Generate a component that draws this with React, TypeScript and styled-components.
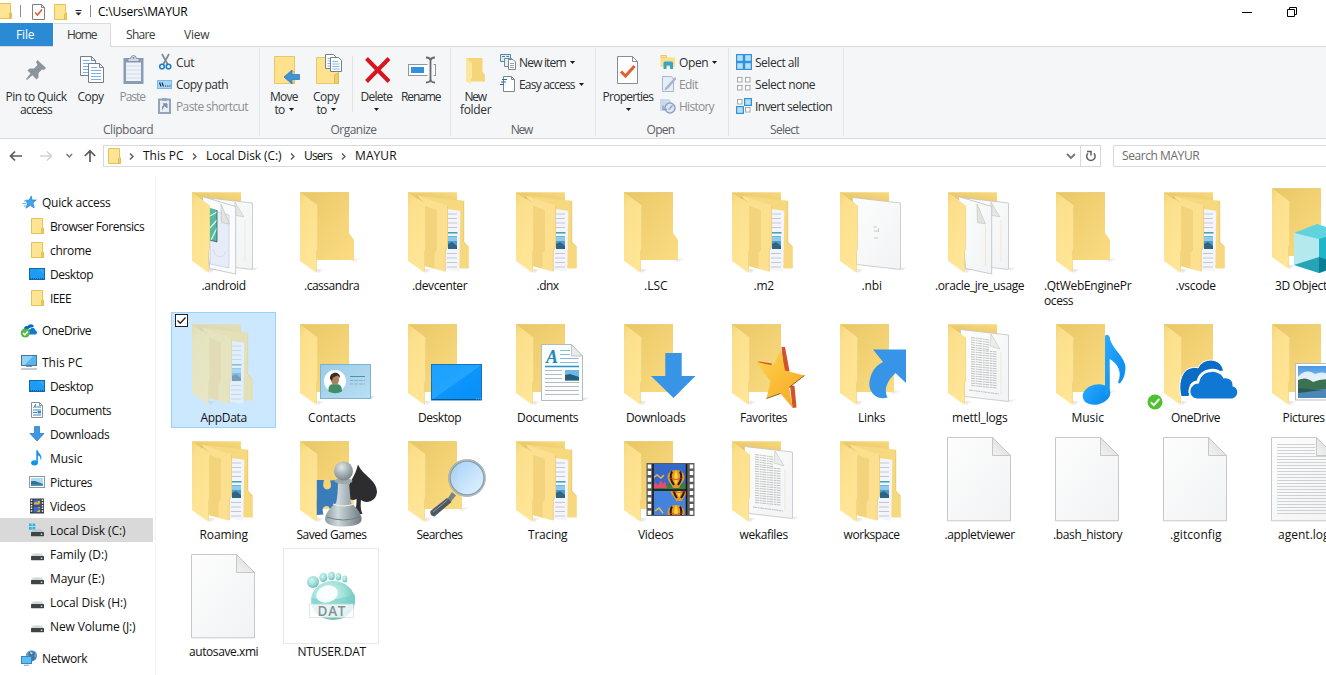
import React, { useLayoutEffect, useRef } from "react";
import styled, { createGlobalStyle, css } from "styled-components";

const GlobalStyle = createGlobalStyle`
  * { box-sizing: border-box; }
  body { margin: 0; background: #fff; overflow: hidden; }
`;

const Window = styled.div`
  width: 1326px;
  height: 675px;
  overflow: hidden;
  display: flex;
  flex-direction: column;
  background: #fff;
  color: #111;
  font-family: "Open Sans", "Noto Sans", "Liberation Sans", sans-serif;
  font-size: 12px;
  line-height: 16px;
`;

/* Text whose tracking adapts to the width the label should take. */
const TextSpan = styled.span`
  display: inline-block;
  flex: none;
  white-space: pre;
`;

function Text({ w, children }: { w: number; children: string }) {
  const ref = useRef<HTMLSpanElement>(null);
  useLayoutEffect(() => {
    const el = ref.current;
    if (!el) return;
    el.style.letterSpacing = "0px";
    el.style.width = "auto";
    const natural = el.getBoundingClientRect().width;
    const spacing = (w + 0.6 - natural) / Math.max(1, children.length - 1);
    el.style.letterSpacing = `${spacing.toFixed(3)}px`;
    el.style.width = `${w}px`;
  }, [w, children]);
  return <TextSpan ref={ref}>{children}</TextSpan>;
}

/* ---------- title bar ---------- */

const TitleBar = styled.header`
  height: 23px;
  flex: none;
  display: flex;
  align-items: center;
  color: #000;
`;
const QuickTools = styled.div`
  display: flex;
  align-items: center;
  height: 23px;
  width: 98px;
  svg { display: block; flex: none; }
`;
const WindowButtons = styled.div`
  margin-left: auto;
  display: flex;
  align-items: center;
  gap: 35px;
  padding-right: 29px;
  height: 20px;
  svg { display: block; }
`;

/* ---------- tabs ---------- */

const Tabs = styled.nav`
  height: 24px;
  flex: none;
  display: flex;
  border-bottom: 1px solid #dadbdc;
`;
const Tab = styled.div<{ $kind?: "file" | "active"; $width: number }>`
  width: ${(p) => p.$width}px;
  height: 23px;
  padding-top: 1px;
  display: flex;
  align-items: center;
  justify-content: center;
  color: #3b3b3b;
  ${(p) =>
    p.$kind === "file" &&
    css`
      background: #2a8ad4;
      color: #fff;
      padding-right: 3px;
    `}
  ${(p) =>
    p.$kind === "active" &&
    css`
      height: 24px;
      padding-top: 0;
      padding-bottom: 1px;
      background: #f5f6f7;
      border: 1px solid #dadbdc;
      border-bottom: 0;
      border-left-color: #fff;
    `}
`;

/* ---------- ribbon ---------- */

const Ribbon = styled.section`
  height: 92px;
  flex: none;
  display: flex;
  background: #f5f6f7;
  border-bottom: 1px solid #dadbdc;
  color: #2c2f33;
`;
const Group = styled.div<{ $width: number }>`
  width: ${(p) => p.$width}px;
  display: flex;
  flex-direction: column;
  justify-content: space-between;
  height: 88px;
  margin-top: 1px;
  border-right: 1px solid #e2e3e4;
`;
const GroupBody = styled.div<{ $pad?: number }>`
  display: flex;
  align-items: flex-start;
  padding-left: ${(p) => p.$pad ?? 0}px;
`;
const GroupName = styled.div`
  height: 16px;
  margin-bottom: -2px;
  padding-right: 3px;
  text-align: center;
  color: #5c6066;
`;
const BigButton = styled.div<{ $width: number; $dim?: boolean }>`
  width: ${(p) => p.$width}px;
  padding-top: 6px;
  display: flex;
  flex-direction: column;
  align-items: center;
  line-height: 13px;
  color: ${(p) => (p.$dim ? "#8b8e92" : "inherit")};
  > svg { display: block; margin-bottom: 4px; overflow: visible; }
`;
const BigLine = styled.div`
  display: flex;
  align-items: center;
  justify-content: center;
  gap: 4px;
  height: 13px;
  white-space: nowrap;
`;
const SmallColumn = styled.div<{ $left?: number }>`
  display: flex;
  flex-direction: column;
  padding-top: 3px;
  margin-left: ${(p) => p.$left ?? 0}px;
`;
const SmallButton = styled.div<{ $dim?: boolean }>`
  height: 22px;
  display: flex;
  align-items: center;
  gap: 3px;
  color: ${(p) => (p.$dim ? "#8b8e92" : "inherit")};
  svg { display: block; flex: none; overflow: visible; }
  > svg:last-child { margin-left: 1px; }
  ${TextSpan} { padding-top: 1px; }
`;
const BodySeparator = styled.div`
  width: 1px;
  height: 56px;
  margin: 8px 0 0 5px;
  background: #e2e3e4;
`;

const Caret = () => (
  <svg width="5" height="3" viewBox="0 0 5 3">
    <path d="M0 0H5L2.5 3Z" fill="#1a1a1a" />
  </svg>
);

/* ---------- address row ---------- */

const NavRow = styled.div`
  height: 36px;
  flex: none;
  display: flex;
  padding-top: 6px;
  svg { display: block; flex: none; }
`;
const NavButtons = styled.div`
  width: 103px;
  height: 22px;
  flex: none;
`;
const AddressBox = styled.div`
  width: 998px;
  height: 22px;
  flex: none;
  display: flex;
  align-items: center;
  border: 1px solid #d9d9d9;
  color: #111;
  padding-left: 3px;
`;
const Crumb = styled.div<{ $gap: number }>`
  display: flex;
  align-items: center;
  gap: 9px;
  margin-left: ${(p) => p.$gap}px;
`;
const AddressEnd = styled.div`
  margin-left: auto;
  display: flex;
  height: 20px;
  align-items: center;
  gap: 4px;
`;
const Refresh = styled.div`
  width: 20px;
  height: 20px;
  display: flex;
  align-items: center;
  justify-content: center;
  border-left: 1px solid #d9d9d9;
`;
const SearchBox = styled.div`
  flex: 1;
  height: 22px;
  margin-left: 12px;
  padding: 2px 0 0 8px;
  border: 1px solid #d9d9d9;
  border-right: 0;
  color: #6d6d6d;
`;

/* ---------- body ---------- */

const Body = styled.main`
  flex: 1;
  min-height: 0;
  display: flex;
`;
const Sidebar = styled.aside`
  width: 156px;
  flex: none;
  border-right: 1px solid #f4f4f4;
  padding-top: 15px;
  display: flex;
  flex-direction: column;
  gap: 8px;
`;
const Branch = styled.div`
  flex: none;
`;
const TreeRow = styled.div<{ $child?: boolean; $active?: boolean }>`
  width: 153px;
  height: 24px;
  display: flex;
  align-items: center;
  gap: 5px;
  padding-left: ${(p) => (p.$child ? 29 : 21)}px;
  background: ${(p) => (p.$active ? "#d9d9d9" : "transparent")};
  svg { display: block; flex: none; overflow: visible; }
  ${TextSpan} { padding-top: 1px; }
`;
const Files = styled.div`
  flex: none;
  width: 1188px;
  margin-left: 15px;
  padding-top: 5px;
  display: grid;
  grid-template-columns: repeat(11, 108px);
  grid-template-rows: 132px 117px 117px 117px;
`;
const Cell = styled.div<{ $selected?: boolean }>`
  position: relative;
  width: 105px;
  height: 116px;
  padding: 2px 0 0 4px;
  ${(p) => p.$selected && css`
    background: #cce8ff;
    box-shadow: inset 0 0 0 1px #99d1ff;
  `}
`;
const IconBox = styled.div<{ $framed?: boolean; $lift?: boolean; $faded?: boolean }>`
  width: 96px;
  height: 96px;
  margin-top: ${(p) => (p.$lift ? -4 : 0)}px;
  margin-bottom: ${(p) => (p.$lift ? 4 : 0)}px;
  border: ${(p) => (p.$framed ? "1px solid #e8e8e8" : "0")};
  opacity: ${(p) => (p.$faded ? 0.55 : 1)};
  svg { display: block; overflow: visible; margin: ${(p) => (p.$framed ? -1 : 0)}px; }
`;
const CellName = styled.div<{ $left?: boolean }>`
  width: 96px;
  display: flex;
  flex-direction: column;
  align-items: ${(p) => (p.$left ? "flex-start" : "center")};
  padding: 0 0 0 ${(p) => (p.$left ? 5 : 1)}px;
  line-height: 15px;
  white-space: nowrap;
`;
const Check = styled.svg`
  position: absolute;
  left: 4px;
  top: 2px;
`;
const SyncBadge = styled.svg`
  position: absolute;
  left: 4px;
  top: 82px;
`;

/* ---------- 16px icons ---------- */

const MiniFolder = ({ w = 16 }: { w?: number }) => (
  <svg width={w} height="16" viewBox="0 0 16 16">
    <path d="M2.5.5H13.5V9L14.5 10V15.5H2.5Z" fill="#ffe493" stroke="#e6c15a" />
    <path d="M12.5 15V10.5L13.5 9.5 14.5 10.5V15Z" fill="#f2cf62" stroke="#dfb850" strokeWidth=".8" />
  </svg>
);
const MiniDesktop = () => (
  <svg width="16" height="16" viewBox="0 0 16 16">
    <rect x=".5" y="2.5" width="15" height="11" fill="#1b9cf7" stroke="#1b659f" />
    <path d="M1 12.5H15" stroke="#0e5c99" strokeDasharray="1 1" />
    <path d="M9 3H15V8Z" fill="#48b3ff" opacity=".5" />
  </svg>
);
const MiniStar = () => (
  <svg width="16" height="16" viewBox="0 0 16 16">
    <path d="M10.300 2 11 6H15.300L12 8.800 13.200 14 9.300 11.300 5 14.200 6.500 9.300 4.500 6.400 8.200 6Z" fill="#3fa4ea" stroke="#2583c8" strokeWidth=".7" />
    <path d="M3 7H6M1.500 9.500H5.500M3 12H5" stroke="#5fb0ea" />
  </svg>
);
const MiniOneDrive = () => (
  <svg width="16" height="16" viewBox="0 0 16 16">
    <path d="M3 9C2 5 5 3.500 6.500 4.200 8 1.300 12 1.500 13 4.500L8 6.200 5.500 10Z" fill="#0b68bd" />
    <path d="M7 12.500C6 9 8 7 9.500 7.300 11 4.800 14 5.800 14.200 8.300 16.500 8.800 16.500 12.300 14.500 12.500Z" fill="#1279d0" />
    <circle cx="4.300" cy="11" r="4.600" fill="#54b948" />
    <path d="M2 11 3.800 12.800 6.800 9.400" fill="none" stroke="#fff" strokeWidth="1.500" />
  </svg>
);
const MiniPC = () => (
  <svg width="16" height="16" viewBox="0 0 16 16">
    <rect x=".5" y="1.500" width="15" height="10" fill="#55b5ee" stroke="#4d7390" />
    <path d="M1 2H12L4 11H1Z" fill="#8fd3fa" />
    <path d="M5 12.500H11M0 15H16" stroke="#8499a8" />
  </svg>
);
const MiniDoc = () => (
  <svg width="16" height="16" viewBox="0 0 16 16">
    <path d="M2.500.5H10.500L13.500 3.500V15.500H2.500Z" fill="#fff" stroke="#8a9199" />
    <path d="M10.500.5V3.500H13.500" fill="none" stroke="#8a9199" />
    <path d="M4.500 6 6.500 2.500 7 6M8 5H12M4 8H12M4 13H12" fill="none" stroke="#3e86b8" />
    <path d="M4 10.500H8" stroke="#3e86b8" />
    <rect x="8.500" y="9" width="3.500" height="2.500" fill="#3c8cc2" />
  </svg>
);
const MiniDown = () => (
  <svg width="16" height="16" viewBox="0 0 16 16">
    <path d="M5.500.5H10.500V7.500H15L8 15 1 7.500H5.500Z" fill="#3c98e6" stroke="#2f7fc6" strokeWidth=".8" />
  </svg>
);
const MiniMusic = () => (
  <svg width="16" height="16" viewBox="0 0 16 16">
    <ellipse cx="5.500" cy="12.800" rx="3.400" ry="2.600" fill="#0e94f0" />
    <path d="M7.300.3H8.700C9 3.500 13.500 4.500 12.300 9.500L11.500 10C12 7 10.500 6 8.900 5.200V12.800H7.300Z" fill="#0e94f0" />
  </svg>
);
const MiniPicture = () => (
  <svg width="16" height="16" viewBox="0 0 16 16">
    <rect x=".5" y="2.500" width="15" height="11" fill="#fff" stroke="#8b979f" />
    <rect x="2" y="4" width="12" height="8" fill="#aedcf3" />
    <path d="M2 7 6 7 14 10V12H2Z" fill="#35718f" />
    <path d="M2 10.500H14V12H2Z" fill="#4a97c4" />
  </svg>
);
const MiniVideo = () => (
  <svg width="16" height="16" viewBox="0 0 16 16">
    <rect x="1" y=".5" width="14" height="15" fill="#3a3a3a" />
    <path d="M2.500 1.500V15M13.500 1.500V15" stroke="#fff" strokeWidth="1.500" strokeDasharray="1.500 1.200" />
    <rect x="4.500" y="1.500" width="7" height="6" fill="#3a68c4" />
    <rect x="4.500" y="8.500" width="7" height="6" fill="#3a68c4" />
    <path d="M5 5 7 3.500 8 5 9 3H11V5L9.500 6.500H5ZM9 9H11L10 11ZM8 14 9.500 12H11V14Z" fill="#e9b32a" />
  </svg>
);
const MiniDrive = ({ win }: { win?: boolean }) => (
  <svg width="16" height="16" viewBox="0 0 16 16">
    {win && <path d="M0 1.500H2.700V4.200H0ZM3.500 1.500H6.300V4.200H3.500ZM0 5H2.700V7.700H0ZM3.500 5H6.300V7.700H3.500Z" fill="#28b8e8" />}
    <path d="M4 7.500H12.500L15 10.500H2Z" fill={win ? "#c0c5c8" : "#d4d7d9"} />
    <rect x="2" y="10" width="13" height="4.200" rx=".6" fill="#3d4548" />
    <rect x="11.800" y="11.500" width="1.500" height="1.500" fill="#8ff0c0" />
  </svg>
);
const MiniNetwork = () => (
  <svg width="16" height="16" viewBox="0 0 16 16">
    <circle cx="10.500" cy="5.800" r="5.600" fill="#6e9fc0" />
    <path d="M8 2C10 1 13 1 14.500 3L13 6 15 8C14 10 12 11 11 11L10 7 7 5Z" fill="#3f78a6" />
    <path d="M9 1.500 12 3 10 4.500Z" fill="#c9e2f1" />
    <rect x=".5" y="6.500" width="10" height="7" fill="#5cbcf5" stroke="#3a86bb" />
    <path d="M3 15.200H8" stroke="#74a6c6" />
  </svg>
);

const miniIcons: Record<string, React.ReactNode> = {
  folder: <MiniFolder />,
  desktop: <MiniDesktop />,
  star: <MiniStar />,
  onedrive: <MiniOneDrive />,
  pc: <MiniPC />,
  doc: <MiniDoc />,
  down: <MiniDown />,
  music: <MiniMusic />,
  picture: <MiniPicture />,
  video: <MiniVideo />,
  drive: <MiniDrive />,
  windrive: <MiniDrive win />,
  network: <MiniNetwork />,
};

type TreeItem = [icon: string, label: string, width: number, active?: boolean];
const tree: TreeItem[][] = [
  [
    ["star", "Quick access", 68],
    ["folder", "Browser Forensics", 94],
    ["folder", "chrome", 41],
    ["desktop", "Desktop", 43],
    ["folder", "IEEE", 21],
  ],
  [["onedrive", "OneDrive", 49]],
  [
    ["pc", "This PC", 40],
    ["desktop", "Desktop", 43],
    ["doc", "Documents", 61],
    ["down", "Downloads", 59],
    ["music", "Music", 32],
    ["picture", "Pictures", 42],
    ["video", "Videos", 35],
    ["windrive", "Local Disk (C:)", 75, true],
    ["drive", "Family (D:)", 57],
    ["drive", "Mayur (E:)", 54],
    ["drive", "Local Disk (H:)", 76],
    ["drive", "New Volume (J:)", 85],
  ],
  [["network", "Network", 45]],
];

/* ---------- 96px icons ---------- */

const HiddenDefs = styled.svg`
  position: absolute;
`;

const Defs = () => (
  <HiddenDefs width="0" height="0">
    <defs>
      <linearGradient id="flap" x1="0" y1="0" x2="0.35" y2="1">
        <stop offset="0" stopColor="#f3d475" />
        <stop offset=".2" stopColor="#fbdf8c" />
        <stop offset="1" stopColor="#ffe596" />
      </linearGradient>
      <linearGradient id="back" x1="1" y1="0" x2="0" y2="1">
        <stop offset="0" stopColor="#f8da80" />
        <stop offset="1" stopColor="#e3bf5c" />
      </linearGradient>
      <linearGradient id="backSoft" x1="0" y1="0" x2="1" y2="1">
        <stop offset="0" stopColor="#e8c666" />
        <stop offset=".35" stopColor="#f0cf70" />
        <stop offset="1" stopColor="#fadc83" />
      </linearGradient>
      <linearGradient id="page" x1="0" y1="0" x2="1" y2="1">
        <stop offset="0" stopColor="#fdfdfd" />
        <stop offset="1" stopColor="#f1f3f4" />
      </linearGradient>
      <linearGradient id="fold" x1="0" y1="1" x2="1" y2="0">
        <stop offset="0" stopColor="#f3f3f3" />
        <stop offset="1" stopColor="#d6d6d6" />
      </linearGradient>
      <linearGradient id="screen" x1="0" y1="0" x2="1" y2="1">
        <stop offset="0" stopColor="#1ba1ff" />
        <stop offset=".5" stopColor="#22a4ff" />
        <stop offset=".51" stopColor="#0c95fb" />
        <stop offset="1" stopColor="#0590f8" />
      </linearGradient>
      <linearGradient id="card" x1="0" y1="0" x2="1" y2="1">
        <stop offset="0" stopColor="#9acbe8" />
        <stop offset="1" stopColor="#b9dff3" />
      </linearGradient>
      <linearGradient id="star" x1="0" y1="0" x2="1" y2="1">
        <stop offset="0" stopColor="#ffd451" />
        <stop offset="1" stopColor="#f5a51f" />
      </linearGradient>
      <linearGradient id="note" x1="0" y1="0" x2="1" y2="1">
        <stop offset="0" stopColor="#2aaaff" />
        <stop offset="1" stopColor="#0587ec" />
      </linearGradient>
      <radialGradient id="ball" cx=".4" cy=".3" r=".8">
        <stop offset="0" stopColor="#e2e8ea" />
        <stop offset=".5" stopColor="#a3afb4" />
        <stop offset="1" stopColor="#6b787e" />
      </radialGradient>
      <linearGradient id="pawn" x1="0" y1="0" x2="1" y2="0">
        <stop offset="0" stopColor="#8d9aa0" />
        <stop offset=".35" stopColor="#cfd8db" />
        <stop offset="1" stopColor="#6d7a80" />
      </linearGradient>
      <linearGradient id="lens" x1="0" y1="0" x2="1" y2="1">
        <stop offset="0" stopColor="#9dcdf7" />
        <stop offset="1" stopColor="#e3f4ff" />
      </linearGradient>
      <radialGradient id="foot" cx=".4" cy=".35" r=".75">
        <stop offset="0" stopColor="#d6f6f2" />
        <stop offset=".5" stopColor="#9fe0da" />
        <stop offset="1" stopColor="#5fb3af" />
      </radialGradient>
      <linearGradient id="sky" x1="0" y1="0" x2="0" y2="1">
        <stop offset="0" stopColor="#4a97e6" />
        <stop offset="1" stopColor="#d3ecfb" />
      </linearGradient>
      <linearGradient id="shadow" x1="0" y1="0" x2="1" y2="0">
        <stop offset="0" stopColor="#000" stopOpacity=".12" />
        <stop offset="1" stopColor="#000" stopOpacity="0" />
      </linearGradient>
    </defs>
  </HiddenDefs>
);

const Flap = () => (
  <>
    <path d="M34 87 42 87 35 91Z" fill="url(#shadow)" />
    <path d="M17 10.300 34.800 23.500V66L33.700 70V91L17 79Z" fill="url(#flap)" />
    <path d="M34.600 24V66L33.500 70V90" fill="none" stroke="#e2c064" strokeWidth=".5" opacity=".7" />
  </>
);
const PlainFolder = ({ children }: { children?: React.ReactNode }) => (
  <>
    <path d="M66 77 80 76 71 80Z" fill="url(#shadow)" />
    <path d="M17 10.300H66V51L71 58V78H17Z" fill="url(#backSoft)" />
    <path d="M17 10.600H66" stroke="#e6c66c" strokeWidth=".6" />
    <Flap />
    {children}
  </>
);
const FullFolder = () => (
  <>
    <path d="M17 10.300H66V22H17Z" fill="url(#back)" />
    <path d="M26 13.500 73 18.700V59.700L77.800 65V86.500L40 86Z" fill="#f6d87e" />
    <path d="M72.800 19V60L77.500 65" fill="none" stroke="#e3c164" strokeWidth=".6" />
    <path d="M52 26.500 69.300 28.700 68.300 89.800 52 87.500Z" fill="#f3f5fa" />
    <path d="M57 32H66M57 36.500H66M57 41H66M57 45.500H66M56 71.500H66M56 76H66M56 80.500H66M56 85H66" stroke="#b3bdcb" strokeWidth=".8" />
    <path d="M57 50.800H66.500" stroke="#2c9bb0" strokeWidth="1.400" />
    <path d="M57 54H66V67H57Z" fill="#4f9ccc" />
    <path d="M57 54.500H66V59H57Z" fill="#8fcbec" />
    <path d="M57 62 61 60 66 64V67H57Z" fill="#2e6484" />
    <path d="M26.300 13.700 56.700 23.500V64.700L54.500 69V89.800L33 84Z" fill="#fce08f" />
    <path d="M35 24 46 28V68L43.500 71V86.500L34 84Z" fill="#f0d077" opacity=".75" />
    <path d="M56.500 24V64.700L54.300 69V89" fill="none" stroke="#e3c164" strokeWidth=".6" />
    <path d="M26 13.500 29 17 34 21 26 16Z" fill="#c7a64f" opacity=".6" />
    <Flap />
  </>
);
const PageBehind = ({ lined, glyph }: { lined?: boolean; glyph?: boolean }) => (
  <>
    <path d="M17 10.300H66V22H17Z" fill="url(#back)" />
    <path d="M78 86 86 85 79 88.500Z" fill="url(#shadow)" />
    <path d="M29.300 15.500 77.500 21V87.500L33.700 82.500Z" fill="url(#page)" stroke="#c3c3c3" strokeWidth=".8" />
    {lined && (
      <>
        <path
          d={Array.from({ length: 21 }, (_, i) => `M40 ${23.500 + i * 2.400}L${i < 5 ? 58 : 66} ${26 + i * 2.400}`).join("") + "M38 76 68 80"}
          fill="none"
          stroke="#a9a9a9"
          strokeWidth=".7"
          strokeDasharray="4 .7 2 .5"
        />
        <path d="M60 20 69 35 59 32Z" fill="#ececea" stroke="#c4c4c0" strokeWidth=".6" />
      </>
    )}
    {glyph && <path d="M50.500 45H54M51 49H55M51 56H55M55.500 46V50" stroke="#b5b5b5" strokeWidth=".7" fill="none" />}
    {!glyph && !lined && <path d="M60 20 69 35 59 33Z" fill="#e5e5e3" stroke="#c4c4c0" strokeWidth=".6" />}
    {!glyph && <path d="M70 38V80" stroke="#efe6cf" strokeWidth=".8" />}
  </>
);
const PageFront = ({ picture }: { picture?: boolean }) => (
  <>
    <path d="M27.300 14.500 60.700 24.500V92L34.700 86.500Z" fill={picture ? "#f9fbfd" : "url(#page)"} stroke="#bcbcbc" strokeWidth=".8" />
    {picture && (
      <>
        <path d="M35 28 54 33V86L35 82Z" fill="#e6edf8" stroke="#b3c2d6" strokeWidth=".6" />
        <path d="M35 26 42 28V60L35 58Z" fill="#55b99d" />
        <path d="M35 34 42 30M35 46 42 38M36 58 42 46" stroke="#d8f3ea" strokeWidth="1.300" />
        <path d="M42 28V60L35 58" stroke="#3a5668" strokeWidth=".8" fill="none" />
        <path d="M38 67C41 77 48 77 51 69" fill="none" stroke="#cfdaea" />
      </>
    )}
    <path d="M46 22 54.500 42 46.500 40.500Z" fill="#e3e3e1" stroke="#bdbdb8" strokeWidth=".6" />
    {!picture && <path d="M54.500 44V84" stroke="#f0e3c0" strokeWidth=".8" />}
  </>
);
const FilePage = ({ lined }: { lined?: boolean }) => (
  <>
    <path d="M16.500 6.500H61.500L79.500 24.500V89.800H16.500Z" fill="url(#page)" stroke="#c6c8c9" />
    {lined && (
      <path
        d={Array.from({ length: 24 }, (_, i) => `M22 ${13.500 + i * 3}H${i < 4 ? 60 : 75}`).join("")}
        stroke="#c9cccf"
        strokeWidth=".9"
      />
    )}
    <path d="M61.500 6.500V24.500H79.500Z" fill="url(#fold)" stroke="#c0c2c3" strokeWidth=".9" />
  </>
);

const ContactsArt = () => (
  <>
    <path d="M88 82 94 82 88 85Z" fill="url(#shadow)" />
    <rect x="37.500" y="50.500" width="50" height="34" fill="url(#card)" stroke="#7fb2d2" />
    <circle cx="52" cy="67" r="11" fill="#fff" />
    <path d="M45.500 77.500C45 70.500 48 70 52 70S59 70.500 59 77.500Q52 81 45.500 77.500Z" fill="#3f8e68" />
    <ellipse cx="52" cy="65.500" rx="4" ry="5.500" fill="#a9825f" />
    <path d="M47 65C46 57.500 57.500 56.500 57 64L54.500 61.500 50 63.500 49 67Z" fill="#3a2c22" />
    <path d="M67 62.500H82" stroke="#4f90b0" />
    <path d="M67 66.500H82M67 70H82" stroke="#7da9bf" strokeWidth=".8" strokeDasharray="3.500 1" />
  </>
);
const DesktopArt = () => (
  <>
    <rect x="40.500" y="50.500" width="50" height="35.500" fill="url(#screen)" stroke="#1873b8" />
    <path d="M41 85.500H90" stroke="#0b5690" />
    <path d="M85 84.800H90" stroke="#7fbde8" strokeDasharray="1 1" />
  </>
);
const DocumentArt = () => (
  <>
    <path d="M84 84 92 83 84 87Z" fill="url(#shadow)" />
    <path d="M42.500 30.500H72.500L83.500 42V86.500H42.500Z" fill="#fcfdfd" stroke="#b4bbc0" />
    <path d="M72.500 30.500V42H83.500Z" fill="#e9ebec" stroke="#b4bbc0" strokeWidth=".8" />
    <text x="47" y="49" fontFamily="Liberation Serif, serif" fontStyle="italic" fontWeight="bold" fontSize="18" fill="#2287bb">A</text>
    <path d="M61 36.500H71M61 40.500H71M61 44.500H79.500M61 48.500H79.500" stroke="#7bb3cf" strokeWidth=".9" />
    <path d="M46 52.500H80" stroke="#2795c8" strokeWidth="1.300" />
    <path d="M46 56.500H63M46 60.500H63M46 64.500H63M46 68.500H80M46 72.500H80M46 76.500H80M46 80.500H80" stroke="#a9b4bb" strokeWidth=".9" />
    <rect x="66" y="56" width="14" height="10.500" fill="#6cb8e6" />
    <path d="M66 61 71 60 80 63V66.500H66Z" fill="#275e80" />
  </>
);
const DownArt = () => <path d="M58.300 39H74.700V62H88.500L66.500 84 44 62H58.300Z" fill="#3794e6" />;
const StarArt = () => (
  <>
    <path d="M66.500 33 70 33 74.500 57 69 61ZM75 71 79.500 72 81.500 93.500 77.500 94ZM42 48 44 47.500 57 49.500 56 52Z" fill="#d2532b" />
    <path d="M66 35 70 56.500 89.500 61.500 74 73.500 77.800 94 65.500 79.500 51.500 84.500 55.500 67.500 41.500 48 58.500 51.500Z" fill="url(#star)" />
    <path d="M65.500 79.500 51.500 84.500M74 73.500 89.500 61.500" stroke="#6d4418" strokeWidth=".8" />
  </>
);
const LinkArt = () => <path d="M50 35.500H83V69L72.500 59C65 66 60 75 64.500 83.500 52 87 44 76 47 65 49 56 54 51 60 48Z" fill="#3794e6" />;
const MusicArt = () => (
  <>
    <ellipse cx="57.500" cy="80.500" rx="14" ry="10" transform="rotate(-14 57.500 80.500)" fill="url(#note)" />
    <path d="M66 22Q68.300 19.500 70.500 22.500C72 36 90 44 86 58 85.500 63 83 67.500 80.500 69.500L79 68.500C83.500 58 79 50 70.700 45V80L66 82Z" fill="url(#note)" />
  </>
);
const OneDriveArt = () => (
  <>
    <path d="M34 82.500C31 70 34 60 40 55.500 45 53 49 53 51 54 56 43 74 43 76.500 57L62 59 51 68 44 70 42 82.500Z" fill="#0b6cc6" stroke="#fff" strokeWidth="1" />
    <path d="M43 79C42.500 73 46 67.500 51 68 53 54 73 53 76.500 63 83 62 87 66 87 71" fill="none" stroke="#fff" strokeWidth="3" />
    <path d="M50 84.500C40 83 42 69.500 52 69.500 54 55.500 73 55 76.500 64.500 83 63.500 86 67.500 85.500 72.500 92.500 73.500 91.500 84.500 84 84.500Z" fill="#0f78d4" />
  </>
);
const PictureArt = () => (
  <>
    <rect x="40.500" y="49.500" width="52" height="36.500" fill="#fff" stroke="#b7bfc4" />
    <rect x="43" y="52" width="47" height="32" fill="url(#sky)" />
    <path d="M43 63Q51 54 60 60 68 56 76 62V72H43Z" fill="#f5fafd" opacity=".85" />
    <path d="M43 66Q51 62 58 68 68 64 80 66L90 70V76H43Z" fill="#3c7151" />
    <path d="M43 75H90V84H43Z" fill="#4b88b8" />
    <path d="M43 74 68 76 43 79Z" fill="#2c5a53" />
  </>
);
const CubeArt = () => (
  <>
    <path d="M39 55 62 46 86 54 63 62Z" fill="#5fd3df" />
    <path d="M39 55 64 61V95L39 87Z" fill="#b4e9ee" />
    <path d="M39 87 64 79V95Z" fill="#25a4b5" />
    <path d="M64 61 87 54V87L64 95Z" fill="#22b5c9" />
    <path d="M64 79 87 87 64 95Z" fill="#087f93" />
  </>
);
const GamesArt = () => (
  <>
    <path d="M33.800 49H41Q38.500 58 44 58.500 50 58 47 49.500L56 49V84H46Q49 75 43 75 38 76 40.500 83.500L33.800 84Z" fill="#3a7cb9" />
    <path d="M75 33.500C80 45 94 49 94 61 93 71 83 73 78 69Q77 79 79.500 83H70Q74 78 73.500 68C68 71 63 67 64 60 66 51 72 46 75 33.500Z" fill="#2d2d2f" />
    <path d="M55 50H66Q67 65 68 72 76 78 78 85C81 93 73 95.500 60.500 95.500S40 93 42.500 85Q45 78 53 72 55 64 55 50Z" fill="url(#pawn)" />
    <ellipse cx="60.500" cy="50" rx="9" ry="3" fill="#9ca9ae" />
    <path d="M50 73Q60 77 71 73" stroke="#eef2f3" strokeWidth="1.200" fill="none" />
    <path d="M44 86Q60 92 77 86" stroke="#727f85" fill="none" />
    <circle cx="60.500" cy="40" r="9.500" fill="url(#ball)" />
  </>
);
const SearchArt = () => (
  <>
    <path d="M61 61 65 64.500 58 73 55 70Z" fill="#76828a" />
    <path d="M56 67 60.500 71 43.500 85.500Q38.500 85 39.500 80Z" fill="#4c5962" />
    <path d="M42 81 56.500 69" stroke="#93a0a8" strokeWidth="1" />
    <circle cx="76" cy="47" r="17.500" fill="url(#lens)" opacity=".93" stroke="#8795a0" strokeWidth="2.500" />
    <circle cx="76" cy="47" r="18" fill="none" stroke="#c2ccd5" strokeWidth=".8" />
  </>
);
const Balloon = ({ x, y }: { x: number; y: number }) => (
  <g transform={`translate(${x} ${y})`}>
    <path d="M0 0C9 0 11 9 5 14L3 18H-3L-5 14C-11 9-9 0 0 0Z" fill="#e5972a" />
    <path d="M-4 1.500C-7 7-5 11-2 15M4 1.500C7 7 5 11 2 15" fill="none" stroke="#241b20" strokeWidth="2" />
    <path d="M0 0C2.500 5 2.500 10 0 15-2.500 10-2.500 5 0 0Z" fill="#ffd52d" />
    <path d="M-7 8Q0 11 7 8" fill="none" stroke="#c93c2a" strokeWidth=".8" />
  </g>
);
const VideoArt = () => (
  <>
    <defs>
      <clipPath id="frameA"><path d="M46 33H79V58H46Z" /></clipPath>
      <clipPath id="frameB"><path d="M46 60H79V84H46Z" /></clipPath>
    </defs>
    <rect x="39.500" y="32" width="48" height="53" fill="#5c5c5c" />
    <path d="M42.500 33.500V85M84.500 33.500V85" stroke="#fff" strokeWidth="3.500" strokeDasharray="4 2.600" />
    <rect x="46" y="33" width="33" height="25" fill="#3569c8" />
    <g clipPath="url(#frameA)">
      <path d="M46 53H79V58H46Z" fill="#35803d" />
      <path d="M46 57 48 51 51 54 54 49 56 53 58 50 60 57Z" fill="#e44c6f" />
      <path d="M46 47 50 44 54 47 57 44" stroke="#f2b04b" strokeWidth="1.500" fill="none" />
      <Balloon x={69} y={39} />
    </g>
    <rect x="46" y="60" width="33" height="24" fill="#4383dd" />
    <g clipPath="url(#frameB)">
      <Balloon x={72} y={52} />
      <Balloon x={69} y={74} />
      <path d="M48 80 52 77 56 82" stroke="#e8be48" strokeWidth="1.500" fill="none" />
    </g>
    <path d="M46 33V84M79.500 33V84M46 59H79" stroke="#171717" strokeWidth="1.500" />
  </>
);
const DatArt = () => (
  <>
    <circle cx="30" cy="34" r="6" fill="url(#foot)" />
    <ellipse cx="40.300" cy="29.500" rx="4" ry="4.500" fill="url(#foot)" />
    <ellipse cx="48.500" cy="28" rx="3.300" ry="4.200" fill="url(#foot)" />
    <ellipse cx="55.500" cy="28.700" rx="2.800" ry="3.800" fill="url(#foot)" />
    <ellipse cx="61.800" cy="31" rx="2.500" ry="3.500" fill="url(#foot)" />
    <ellipse cx="50" cy="52.500" rx="22" ry="19.500" fill="url(#foot)" />
    <path d="M29 50Q48 55 72 46 73 58 69 62H32Z" fill="#74cfc9" opacity=".6" />
    <ellipse cx="44" cy="46" rx="11" ry="8.500" fill="#fff" opacity=".9" transform="rotate(-18 44 46)" />
    <rect x="26.500" y="56" width="44" height="13.500" fill="#fff" opacity=".78" stroke="#cfd6d6" strokeWidth=".8" />
    <text x="34.500" y="67.500" fontFamily="Open Sans, sans-serif" fontWeight="600" fontSize="13.500" textLength="28" fill="#859092">DAT</text>
  </>
);

const art: Record<string, React.ReactNode> = {
  plain: <PlainFolder />,
  full: <FullFolder />,
  android: <><PageBehind /><PageFront picture /><Flap /></>,
  nbi: <><PageBehind glyph /><Flap /></>,
  pages: <><PageBehind /><PageFront /><Flap /></>,
  logs: <><PageBehind lined /><Flap /></>,
  contacts: <PlainFolder><ContactsArt /></PlainFolder>,
  desktop: <PlainFolder><DesktopArt /></PlainFolder>,
  documents: <PlainFolder><DocumentArt /></PlainFolder>,
  downloads: <PlainFolder><DownArt /></PlainFolder>,
  favorites: <PlainFolder><StarArt /></PlainFolder>,
  links: <PlainFolder><LinkArt /></PlainFolder>,
  music: <PlainFolder><MusicArt /></PlainFolder>,
  onedrive: <PlainFolder><OneDriveArt /></PlainFolder>,
  pictures: <PlainFolder><PictureArt /></PlainFolder>,
  cube: <PlainFolder><CubeArt /></PlainFolder>,
  games: <PlainFolder><GamesArt /></PlainFolder>,
  searches: <PlainFolder><SearchArt /></PlainFolder>,
  videos: <PlainFolder><VideoArt /></PlainFolder>,
  file: <FilePage />,
  log: <FilePage lined />,
  dat: <DatArt />,
};

type FileItem = { icon: string; name: [string, number][] };
const f = (icon: string, label: string, w: number): FileItem => ({ icon, name: [[label, w]] });
const files: FileItem[] = [
  f("android", ".android", 44),
  f("plain", ".cassandra", 55),
  f("full", ".devcenter", 55),
  f("full", ".dnx", 22),
  f("plain", ".LSC", 23),
  f("full", ".m2", 20),
  f("nbi", ".nbi", 20),
  f("pages", ".oracle_jre_usage", 89),
  { icon: "plain", name: [[".QtWebEnginePr", 87], ["ocess", 29]] },
  f("full", ".vscode", 40),
  f("cube", "3D Objects", 57),
  f("full", "AppData", 46),
  f("contacts", "Contacts", 47),
  f("desktop", "Desktop", 43),
  f("documents", "Documents", 61),
  f("downloads", "Downloads", 59),
  f("favorites", "Favorites", 47),
  f("links", "Links", 27),
  f("logs", "mettl_logs", 55),
  f("music", "Music", 32),
  f("onedrive", "OneDrive", 49),
  f("pictures", "Pictures", 42),
  f("full", "Roaming", 48),
  f("games", "Saved Games", 70),
  f("searches", "Searches", 46),
  f("full", "Tracing", 39),
  f("videos", "Videos", 35),
  f("logs", "wekafiles", 48),
  f("full", "workspace", 56),
  f("file", ".appletviewer", 70),
  f("file", ".bash_history", 69),
  f("file", ".gitconfig", 51),
  f("log", "agent.log", 51),
  f("file", "autosave.xmi", 69),
  f("dat", "NTUSER.DAT", 68),
];

/* ---------- ribbon icons ---------- */

const PinIcon = () => (
  <svg width="32" height="32" viewBox="0 0 32 32">
    <path d="M17.500 6 26 14 24 16 22 15.500 18.500 19 18.500 23.500 16.500 25.500 12.300 21.300 7 26 6 25 10.500 19.500 7.500 16.500 9.500 14.500 14 14.500 17.500 11 16 8Z" fill="#8c959d" />
  </svg>
);
const CopyIcon = () => (
  <svg width="32" height="32" viewBox="0 0 32 32">
    {[[5, 2], [13, 9]].map(([x, y]) => (
      <g key={x} transform={`translate(${x} ${y})`}>
        <path d="M.5.5H11.500L15.500 4.500V19.500H.5Z" fill="#fff" stroke="#75808d" />
        <path d="M11.500.5V4.500H15.500" fill="none" stroke="#75808d" />
        <path d="M3 4.500H9M3 7.500H13M3 10.500H13M3 13.500H13M3 16.500H13" stroke="#7db1e3" />
      </g>
    ))}
  </svg>
);
const PasteIcon = () => (
  <svg width="32" height="32" viewBox="0 0 32 32">
    <rect x="6.500" y="4" width="20" height="26" fill="#8a9bb5" />
    <rect x="9" y="8.500" width="15" height="18.500" fill="#eef3fa" />
    <path d="M9 12H24M9 16H24M9 20H24M9 24H24" stroke="#cdd9e8" />
    <path d="M11 7.500V4.500H13.500Q14 1.500 16.500 1.500T19.500 4.500H22V7.500Z" fill="#d3dae6" stroke="#8493ab" />
    <circle cx="16.500" cy="4" r="1" fill="#8493ab" />
  </svg>
);
const MoveIcon = () => (
  <svg width="32" height="32" viewBox="0 0 32 32">
    <path d="M6.500 2.500H26.500V29.500H6.500Z" fill="#fee28d" stroke="#e8c766" />
    <path d="M22.500 29V20L24.500 17.500H26.500V29.500Z" fill="#f7d673" stroke="#dfbc58" />
    <path d="M16 23 24 16V20.500H31.500V25.500H24V30Z" fill="#3f93d8" stroke="#2e7fc2" strokeWidth=".8" />
  </svg>
);
const CopyToIcon = () => (
  <svg width="32" height="32" viewBox="0 0 32 32">
    <path d="M6.500 3.500H28.500V29.500H6.500Z" fill="#fee28d" stroke="#e8c766" />
    <path d="M24.500 29V21L28.500 19V29.500Z" fill="#f0cc66" stroke="#dfbc58" />
    {[[15, 0], [20, 3]].map(([x, y]) => (
      <g key={x} transform={`translate(${x} ${y})`}>
        <path d="M.5.5H8.500L11.500 3.500V14.500H.5Z" fill="#fff" stroke="#75808d" />
        <path d="M2.500 4.500H8M2.500 7H9.500M2.500 9.500H9.500M2.500 12H9.500" stroke="#82b3e2" />
      </g>
    ))}
  </svg>
);
const DeleteIcon = () => (
  <svg width="32" height="32" viewBox="0 0 32 32">
    <path d="M5.500 4.500 28 27.500M28 4.500 5.500 27.500" stroke="#d8141f" strokeWidth="4" />
  </svg>
);
const RenameIcon = () => (
  <svg width="32" height="32" viewBox="0 0 32 32">
    <rect x="3.500" y="10.500" width="27" height="11" fill="#fff" stroke="#8e979f" />
    <rect x="6" y="13" width="13" height="6" fill="#3191de" />
    <path d="M22.500 10H28.500V22H22.500Z" fill="#f5f6f7" />
    <path d="M21 3.500Q25.500 3.500 25.500 7V25Q25.500 28.500 21 28.500M30 3.500Q25.500 3.500 25.500 7M25.500 25Q25.500 28.500 30 28.500" fill="none" stroke="#656c73" strokeWidth="1.800" />
  </svg>
);
const NewFolderIcon = () => (
  <svg width="32" height="32" viewBox="0 0 32 32">
    <path d="M6 4H22.500V18L25 21V27.500H6Z" fill="#f5d57a" />
    <path d="M6 4 12 9V23.500L11 25V30L6 27.500Z" fill="#ffe69c" />
  </svg>
);
const PropertiesIcon = () => (
  <svg width="32" height="32" viewBox="0 0 32 32">
    <path d="M5.500 2.500H20.500L25.500 7.500V29.500H5.500Z" fill="#fff" stroke="#878d93" />
    <path d="M20.500 2.500V7.500H25.500" fill="none" stroke="#878d93" />
    <path d="M9 17.500 13.500 22 22.500 12" fill="none" stroke="#e2602f" strokeWidth="3" />
  </svg>
);
const TinyProperties = () => (
  <svg width="13" height="16" viewBox="0 0 13 16">
    <path d="M.5.500H9.500L12.500 3.500V15.500H.5Z" fill="#fff" stroke="#808080" />
    <path d="M9.500.500V3.500H12.500" fill="none" stroke="#808080" />
    <path d="M3 8.500 5.500 11 10 5.500" fill="none" stroke="#e0603a" strokeWidth="1.700" />
  </svg>
);
const CutIcon = () => (
  <svg width="15" height="16" viewBox="0 0 15 16">
    <path d="M4 0 9.800 10.500M11 0 5.200 10.500" stroke="#7c8b99" strokeWidth="1.700" />
    <circle cx="4" cy="12.500" r="2.300" fill="none" stroke="#1f7fc4" strokeWidth="1.600" />
    <circle cx="10.500" cy="12.500" r="2.300" fill="none" stroke="#1f7fc4" strokeWidth="1.600" />
  </svg>
);
const CopyPathIcon = () => (
  <svg width="15" height="16" viewBox="0 0 15 16">
    <rect x="-.5" y="4.500" width="14" height="8" fill="#a9d8f7" stroke="#7fb8de" />
    <path d="M1.500 6.500 3 10.500M4 6.500 5.500 10.500" stroke="#14314a" strokeWidth="1.200" />
    <path d="M7 10H12.500" stroke="#14314a" strokeWidth="1.200" strokeDasharray="1.200 1" />
  </svg>
);
const PasteShortcutIcon = () => (
  <svg width="15" height="16" viewBox="0 0 15 16">
    <rect x="1" y="1.500" width="11" height="13.500" fill="#e8eef7" stroke="#8b9bb4" strokeWidth="1.800" />
    <path d="M4 0H9V3H4Z" fill="#9aa8bd" />
    <path d="M4.500 11.500V9Q4.500 7.500 7 7.500M5 5.800H9V10Z" fill="#7f90ab" stroke="#7f90ab" />
  </svg>
);
const NewItemIcon = () => (
  <svg width="16" height="16" viewBox="0 0 16 16">
    <path d="M.5.5H10.500V7.500H.5Z" fill="#d9ecf8" stroke="#5a86a6" />
    <path d="M2 2.500H5M6.500 2.500H9" stroke="#3f83b5" />
    <path d="M4.500 4.500H11.500V12.500H4.500Z" fill="#e7eef4" stroke="#7a8791" />
    <path d="M8.500 5.500H13L15.500 8V15.500H8.500Z" fill="#fff" stroke="#7a8791" />
    <path d="M10 9.500H14M10 11.500H14M10 13.500H14" stroke="#9aa4ac" />
  </svg>
);
const EasyIcon = () => (
  <svg width="16" height="16" viewBox="0 0 16 16">
    <path d="M3.500.5H11.500L14.500 3.500V15.500H3.500Z" fill="#fff" stroke="#7a8791" />
    <path d="M11.500.5V3.500H14.500" fill="none" stroke="#7a8791" />
    <path d="M2 3.500H7M1 6H6M0 8.500H4" stroke="#2b6f9e" strokeWidth="1.200" />
  </svg>
);
const OpenIcon = () => (
  <svg width="16" height="16" viewBox="0 0 16 16">
    <path d="M.5 1.500H6.500L7.500 3.500H15V13H.5Z" fill="#fbe08a" />
    <path d="M.8 1.500H6.500V3H.8Z" fill="#fff" stroke="#e8b94e" strokeWidth=".8" />
    <path d="M3.500 15V9Q3.500 7.500 5 7.500H11.500Q13 7.500 13 9V15H10V11.500H6.500V15Z" fill="#35a5c9" />
  </svg>
);
const EditIcon = () => (
  <svg width="16" height="16" viewBox="0 0 16 16">
    <path d="M2.500.5H11.500L13.500 3V15.500H2.500Z" fill="#e4edf8" stroke="#a9b8cc" />
    <path d="M15 1.500 6 11.500 5 14 7.500 12.500 16 3Z" fill="#a8b9d0" stroke="#92a5be" strokeWidth=".6" />
  </svg>
);
const HistoryIcon = () => (
  <svg width="16" height="16" viewBox="0 0 16 16">
    <path d="M0 1H9L11 3V13H0Z" fill="#ccd9ed" />
    <circle cx="10" cy="10" r="5" fill="#dbe5f2" stroke="#8fa4c3" strokeWidth="1.500" />
    <path d="M3 7.500V11.500H7M10 10 12.500 7.500M8 11H10.500" fill="none" stroke="#8398b9" strokeWidth="1.200" />
  </svg>
);
const SelectIcon = ({ on }: { on: boolean[] }) => (
  <svg width="16" height="16" viewBox="0 0 16 16">
    {on.map((active, i) => {
      const x = (i % 2) * 8;
      const y = Math.floor(i / 2) * 8;
      return active ? (
        <rect key={i} x={x + 0.6} y={y + 0.6} width="6.800" height="6.800" fill="#b6def8" stroke="#2c93dc" strokeWidth="1.200" />
      ) : (
        <rect key={i} x={x + 1.500} y={y + 1.500} width="4.500" height="4.500" fill="#fff" stroke="#a5a8ab" />
      );
    })}
  </svg>
);

const Chevron = () => (
  <svg width="5" height="7" viewBox="0 0 5 7">
    <path d="M1 .5 4 3.500 1 6.500" fill="none" stroke="#555" strokeWidth="1.300" />
  </svg>
);

export default function App() {
  return (
    <Window>
      <GlobalStyle />
      <Defs />
      <TitleBar>
        <QuickTools>
          <svg width="97" height="23" viewBox="0 0 97 23">
            <path d="M-2 3.500H10.500V12L11.500 13V18.500H-2Z" fill="#ffe493" stroke="#e6c15a" />
            <path d="M9.500 18V13.500L10.500 12.500V18Z" fill="#f2cf62" stroke="#dfb850" strokeWidth=".8" />
            <path d="M20.500 5V17M90.500 5V17" stroke="#8a8a8a" />
            <g transform="translate(32 4)"><TinyProperties /></g>
            <path d="M54.500 4.500H65.500V12L66.500 13V19.500H54.500Z" fill="#ffe493" stroke="#e6c15a" />
            <path d="M64.500 19V14L66.500 13V19.500Z" fill="#f2cf62" stroke="#dfb850" strokeWidth=".8" />
            <path d="M75.500 10.500H81.500" stroke="#222" />
            <path d="M75.500 12.500H81.500L78.500 15.500Z" fill="#222" />
          </svg>
        </QuickTools>
        <Text w={89}>C:\Users\MAYUR</Text>
        <WindowButtons>
          <svg width="10" height="10" viewBox="0 0 10 10"><path d="M0 5.500H10" stroke="#000" /></svg>
          <svg width="10" height="10" viewBox="0 0 10 10">
            <path d="M.5 2.500H7.500V9.500H.5ZM2.500 2.500V.5H9.500V7.500H7.500" fill="none" stroke="#000" />
          </svg>
        </WindowButtons>
      </TitleBar>

      <Tabs>
        <Tab $kind="file" $width={53}><Text w={18}>File</Text></Tab>
        <Tab $kind="active" $width={58}><Text w={30}>Home</Text></Tab>
        <Tab $width={59}><Text w={29}>Share</Text></Tab>
        <Tab $width={53}><Text w={25}>View</Text></Tab>
      </Tabs>

      <Ribbon>
        <Group $width={260}>
          <GroupBody>
            <BigButton $width={72}>
              <PinIcon />
              <BigLine><Text w={61}>Pin to Quick</Text></BigLine>
              <BigLine><Text w={32}>access</Text></BigLine>
            </BigButton>
            <BigButton $width={37}>
              <CopyIcon />
              <BigLine><Text w={26}>Copy</Text></BigLine>
            </BigButton>
            <BigButton $width={47} $dim>
              <PasteIcon />
              <BigLine><Text w={26}>Paste</Text></BigLine>
            </BigButton>
            <SmallColumn $left={2}>
              <SmallButton><CutIcon /><Text w={18}>Cut</Text></SmallButton>
              <SmallButton><CopyPathIcon /><Text w={52}>Copy path</Text></SmallButton>
              <SmallButton $dim><PasteShortcutIcon /><Text w={72}>Paste shortcut</Text></SmallButton>
            </SmallColumn>
          </GroupBody>
          <GroupName><Text w={50}>Clipboard</Text></GroupName>
        </Group>

        <Group $width={191}>
          <GroupBody $pad={3}>
            <BigButton $width={42}>
              <MoveIcon />
              <BigLine><Text w={28}>Move</Text></BigLine>
              <BigLine><Text w={10}>to</Text><Caret /></BigLine>
            </BigButton>
            <BigButton $width={42}>
              <CopyToIcon />
              <BigLine><Text w={26}>Copy</Text></BigLine>
              <BigLine><Text w={10}>to</Text><Caret /></BigLine>
            </BigButton>
            <BodySeparator />
            <BigButton $width={47}>
              <DeleteIcon />
              <BigLine><Text w={32}>Delete</Text></BigLine>
              <BigLine><Caret /></BigLine>
            </BigButton>
            <BigButton $width={42}>
              <RenameIcon />
              <BigLine><Text w={40}>Rename</Text></BigLine>
            </BigButton>
          </GroupBody>
          <GroupName><Text w={46}>Organize</Text></GroupName>
        </Group>

        <Group $width={145}>
          <GroupBody>
            <BigButton $width={49}>
              <NewFolderIcon />
              <BigLine><Text w={22}>New</Text></BigLine>
              <BigLine><Text w={31}>folder</Text></BigLine>
            </BigButton>
            <SmallColumn>
              <SmallButton><NewItemIcon /><Text w={47}>New item</Text><Caret /></SmallButton>
              <SmallButton><EasyIcon /><Text w={56}>Easy access</Text><Caret /></SmallButton>
            </SmallColumn>
          </GroupBody>
          <GroupName><Text w={22}>New</Text></GroupName>
        </Group>

        <Group $width={133}>
          <GroupBody>
            <BigButton $width={64}>
              <PropertiesIcon />
              <BigLine><Text w={51}>Properties</Text></BigLine>
              <BigLine><Caret /></BigLine>
            </BigButton>
            <SmallColumn>
              <SmallButton><OpenIcon /><Text w={29}>Open</Text><Caret /></SmallButton>
              <SmallButton $dim><EditIcon /><Text w={19}>Edit</Text></SmallButton>
              <SmallButton $dim><HistoryIcon /><Text w={35}>History</Text></SmallButton>
            </SmallColumn>
          </GroupBody>
          <GroupName><Text w={28}>Open</Text></GroupName>
        </Group>

        <Group $width={115}>
          <GroupBody $pad={7}>
            <SmallColumn>
              <SmallButton><SelectIcon on={[true, true, true, true]} /><Text w={44}>Select all</Text></SmallButton>
              <SmallButton><SelectIcon on={[false, false, false, false]} /><Text w={60}>Select none</Text></SmallButton>
              <SmallButton><SelectIcon on={[false, true, true, false]} /><Text w={77}>Invert selection</Text></SmallButton>
            </SmallColumn>
          </GroupBody>
          <GroupName><Text w={29}>Select</Text></GroupName>
        </Group>
      </Ribbon>

      <NavRow>
        <NavButtons>
          <svg width="103" height="22" viewBox="0 0 103 22">
            <path d="M22 11H11M15 6.500 10.500 11 15 15.500" fill="none" stroke="#5c5c5c" strokeWidth="1.700" />
            <path d="M40 11H51M47 6.500 51.500 11 47 15.500" fill="none" stroke="#d2d2d2" strokeWidth="1.500" />
            <path d="M66.500 9 69.300 12 72.100 9" fill="none" stroke="#777" strokeWidth="1.500" />
            <path d="M90 17V6M84.800 11 90 5.800 95.200 11" fill="none" stroke="#5c5c5c" strokeWidth="1.700" />
          </svg>
        </NavButtons>
        <AddressBox>
          <svg width="15" height="16" viewBox="0 0 15 16">
            <path d="M1.500.5H12.500V9L13.500 10V15.500H1.500Z" fill="#ffe493" stroke="#e6c15a" />
            <path d="M11.500 15V10.500L12.500 9.500 13.500 10.500V15Z" fill="#f2cf62" stroke="#dfb850" strokeWidth=".8" />
          </svg>
          <Crumb $gap={7}><Chevron /><Text w={40}>This PC</Text></Crumb>
          <Crumb $gap={9}><Chevron /><Text w={75}>Local Disk (C:)</Text></Crumb>
          <Crumb $gap={9}><Chevron /><Text w={28}>Users</Text></Crumb>
          <Crumb $gap={9}><Chevron /><Text w={41}>MAYUR</Text></Crumb>
          <AddressEnd>
            <svg width="10" height="8" viewBox="0 0 10 8"><path d="M1 2 5 6 9 2" fill="none" stroke="#777" strokeWidth="1.900" /></svg>
            <Refresh>
              <svg width="12" height="12" viewBox="0 0 12 12">
                <path d="M8.800 3.200A4.200 4.200 0 1 1 3 3.200M2 1.500H6V5.500" fill="none" stroke="#606060" strokeWidth="1.500" />
              </svg>
            </Refresh>
          </AddressEnd>
        </AddressBox>
        <SearchBox><Text w={77}>Search MAYUR</Text></SearchBox>
      </NavRow>

      <Body>
        <Sidebar>
          {tree.map((branch, b) => (
            <Branch key={b}>
              {branch.map(([icon, label, w, active], i) => (
                <TreeRow key={i} $child={i > 0} $active={active}>
                  {miniIcons[icon]}
                  <Text w={w}>{label}</Text>
                </TreeRow>
              ))}
            </Branch>
          ))}
        </Sidebar>
        <Files>
          {files.map((item) => {
            const label = item.name[0][0];
            const selected = label === "AppData";
            return (
              <Cell key={label} $selected={selected}>
                <IconBox $framed={item.icon === "dat"} $lift={item.icon === "cube"} $faded={selected}>
                  <svg width="96" height="96" viewBox="0 0 96 96">{art[item.icon]}</svg>
                </IconBox>
                <CellName $left={item.name.length > 1}>
                  {item.name.map(([line, w]) => <Text key={line} w={w}>{line}</Text>)}
                </CellName>
                {selected && (
                  <Check width="13" height="13" viewBox="0 0 13 13">
                    <rect x=".5" y=".5" width="12" height="12" fill="#fff" stroke="#222" />
                    <path d="M2.500 6.500 5.300 9.300 10.500 3.500" fill="none" stroke="#222" strokeWidth="1.300" />
                  </Check>
                )}
                {label === "OneDrive" && (
                  <SyncBadge width="16" height="16" viewBox="0 0 16 16">
                    <circle cx="8" cy="8" r="7.500" fill="#4fc12f" />
                    <path d="M3.800 8.300 6.800 11.200 12.300 5" fill="none" stroke="#fff" strokeWidth="1.900" />
                  </SyncBadge>
                )}
              </Cell>
            );
          })}
        </Files>
      </Body>
    </Window>
  );
}
